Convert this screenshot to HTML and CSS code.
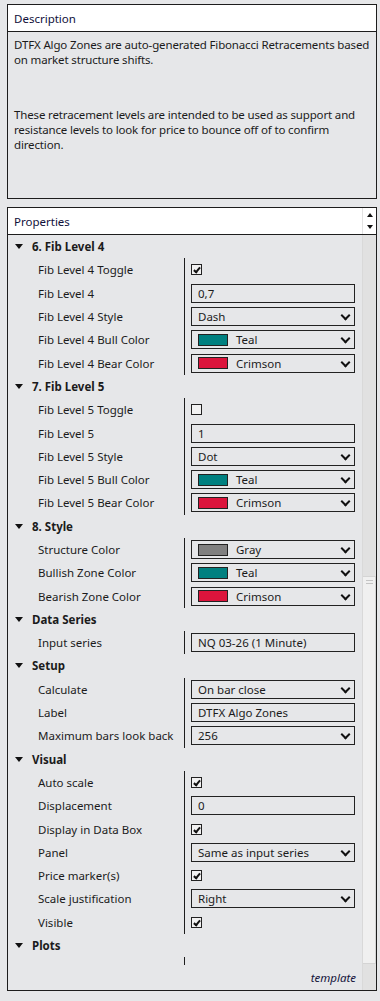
FILE: index.html
```html
<!DOCTYPE html>
<html lang="en">
<head>
    <meta charset="UTF-8">
    <meta name="viewport" content="width=device-width, initial-scale=1.0">
    <title>Indicator Properties</title>
    <link rel="stylesheet" href="styles.css">
</head>
<body>
    <div class="panel desc">
        <div class="panel-head">Description</div>
        <div class="desc-body">
            <p>DTFX Algo Zones are auto-generated Fibonacci Retracements based on market structure shifts.</p>
            <p class="second">These retracement levels are intended to be used as support and resistance levels to look for price to bounce off of to confirm direction.</p>
        </div>
    </div>

    <div class="panel props">
        <div class="panel-head">
            <span class="head-title">Properties</span>
            <div class="head-arrows">
                <span class="tri-up"></span>
                <span class="tri-down"></span>
            </div>
        </div>
        <div class="props-body">
            <div class="main">
                <div class="list">
                    <div class="cat"><span class="caret"></span>6. Fib Level 4</div>
                    <div class="items">
                        <div class="lbl">Fib Level 4 Toggle</div>
                        <div class="val"><span class="check on"></span></div>
                        <div class="lbl">Fib Level 4</div>
                        <div class="val"><div class="box">0,7</div></div>
                        <div class="lbl">Fib Level 4 Style</div>
                        <div class="val"><div class="box drop">Dash</div></div>
                        <div class="lbl">Fib Level 4 Bull Color</div>
                        <div class="val"><div class="box drop"><span class="swatch teal"></span>Teal</div></div>
                        <div class="lbl">Fib Level 4 Bear Color</div>
                        <div class="val"><div class="box drop"><span class="swatch crimson"></span>Crimson</div></div>
                    </div>

                    <div class="cat"><span class="caret"></span>7. Fib Level 5</div>
                    <div class="items">
                        <div class="lbl">Fib Level 5 Toggle</div>
                        <div class="val"><span class="check"></span></div>
                        <div class="lbl">Fib Level 5</div>
                        <div class="val"><div class="box">1</div></div>
                        <div class="lbl">Fib Level 5 Style</div>
                        <div class="val"><div class="box drop">Dot</div></div>
                        <div class="lbl">Fib Level 5 Bull Color</div>
                        <div class="val"><div class="box drop"><span class="swatch teal"></span>Teal</div></div>
                        <div class="lbl">Fib Level 5 Bear Color</div>
                        <div class="val"><div class="box drop"><span class="swatch crimson"></span>Crimson</div></div>
                    </div>

                    <div class="cat"><span class="caret"></span>8. Style</div>
                    <div class="items">
                        <div class="lbl">Structure Color</div>
                        <div class="val"><div class="box drop"><span class="swatch gray"></span>Gray</div></div>
                        <div class="lbl">Bullish Zone Color</div>
                        <div class="val"><div class="box drop"><span class="swatch teal"></span>Teal</div></div>
                        <div class="lbl">Bearish Zone Color</div>
                        <div class="val"><div class="box drop"><span class="swatch crimson"></span>Crimson</div></div>
                    </div>

                    <div class="cat"><span class="caret"></span>Data Series</div>
                    <div class="items">
                        <div class="lbl">Input series</div>
                        <div class="val"><div class="box">NQ 03-26 (1 Minute)</div></div>
                    </div>

                    <div class="cat"><span class="caret"></span>Setup</div>
                    <div class="items">
                        <div class="lbl">Calculate</div>
                        <div class="val"><div class="box drop">On bar close</div></div>
                        <div class="lbl">Label</div>
                        <div class="val"><div class="box">DTFX Algo Zones</div></div>
                        <div class="lbl">Maximum bars look back</div>
                        <div class="val"><div class="box drop">256</div></div>
                    </div>

                    <div class="cat"><span class="caret"></span>Visual</div>
                    <div class="items">
                        <div class="lbl">Auto scale</div>
                        <div class="val"><span class="check on"></span></div>
                        <div class="lbl">Displacement</div>
                        <div class="val"><div class="box">0</div></div>
                        <div class="lbl">Display in Data Box</div>
                        <div class="val"><span class="check on"></span></div>
                        <div class="lbl">Panel</div>
                        <div class="val"><div class="box drop">Same as input series</div></div>
                        <div class="lbl">Price marker(s)</div>
                        <div class="val"><span class="check on"></span></div>
                        <div class="lbl">Scale justification</div>
                        <div class="val"><div class="box drop">Right</div></div>
                        <div class="lbl">Visible</div>
                        <div class="val"><span class="check on"></span></div>
                    </div>

                    <div class="cat"><span class="caret"></span>Plots</div>
                    <div class="items">
                        <div class="lbl"></div>
                        <div class="val"></div>
                    </div>
                </div>
                <div class="footer">template</div>
            </div>
            <div class="scrollbar">
                <div class="thumb"><span class="grip"></span><span class="grip"></span></div>
            </div>
        </div>
    </div>
</body>
</html>
```

FILE: styles.css
```css
* {
    margin: 0;
    padding: 0;
    box-sizing: border-box;
}

body {
    width: 380px;
    height: 1001px;
    overflow: hidden;
    padding: 4px 0 0 7px;
    background: #e6e7e9;
    font-family: 'Noto Sans', 'Open Sans', sans-serif;
    font-size: 11.5px;
    color: #1b1b1b;
}

.panel {
    width: 370px;
    border: 1px solid #1d1d1d;
    background: #e6e7e9;
}

.panel-head {
    height: 27px;
    background: #fff;
    border-bottom: 1px solid #1d1d1d;
    padding-left: 6px;
    display: flex;
    align-items: center;
    color: #10103a;
}

/* description */
.desc {
    height: 195px;
}

.desc-body {
    padding: 5px 0 0 6px;
    line-height: 15px;
    letter-spacing: -0.15px;
}

.desc-body .second {
    margin-top: 40px;
}

/* properties */
.props {
    margin-top: 8px;
    height: 784px;
}

.props .panel-head {
    padding-right: 0;
}

.head-title {
    flex: 1;
}

.head-arrows {
    width: 14px;
    height: 100%;
    border-left: 1px solid #e2e2e2;
    display: flex;
    flex-direction: column;
    align-items: center;
    justify-content: center;
    gap: 8px;
}

.tri-up,
.tri-down {
    width: 0;
    height: 0;
    border-left: 3.5px solid transparent;
    border-right: 3.5px solid transparent;
}

.tri-up {
    border-bottom: 4px solid #111;
}

.tri-down {
    border-top: 4px solid #111;
}

.props-body {
    height: 755px;
    display: flex;
}

.main {
    width: 354px;
    display: flex;
    flex-direction: column;
}

.list {
    height: 730px;
    overflow: hidden;
}

.cat {
    height: 23.3px;
    display: flex;
    align-items: center;
    padding-left: 7px;
    font-weight: bold;
}

.caret {
    width: 0;
    height: 0;
    border-left: 4px solid transparent;
    border-right: 4px solid transparent;
    border-top: 5px solid #111;
    margin-right: 9px;
}

.items {
    display: grid;
    grid-template-columns: 177px 1fr;
    grid-auto-rows: 23.3px;
}

.lbl {
    padding-left: 30px;
    border-right: 1px solid #1d1d1d;
    display: flex;
    align-items: center;
    white-space: nowrap;
}

.val {
    padding-left: 6px;
    display: flex;
    align-items: center;
}

.box {
    width: 164px;
    height: 19px;
    border: 1px solid #222;
    padding-left: 6px;
    display: flex;
    align-items: center;
    white-space: nowrap;
    position: relative;
}

.box.drop::after {
    content: '';
    position: absolute;
    right: 5px;
    top: 4px;
    width: 5px;
    height: 5px;
    border-right: 2px solid #111;
    border-bottom: 2px solid #111;
    transform: rotate(45deg);
}

.swatch {
    width: 30px;
    height: 12px;
    border: 1px solid #222;
    margin-right: 8px;
}

.swatch.teal {
    background: #008080;
}

.swatch.crimson {
    background: #dc143c;
}

.swatch.gray {
    background: #808080;
}

.check {
    width: 11px;
    height: 11px;
    border: 1px solid #222;
    background: #f2f2f2;
    position: relative;
}

.check.on::after {
    content: '';
    position: absolute;
    left: 3px;
    top: 1px;
    width: 2px;
    height: 5px;
    border-right: 2px solid #111;
    border-bottom: 2px solid #111;
    transform: rotate(40deg);
}

.footer {
    flex: 1;
    display: flex;
    align-items: center;
    justify-content: flex-end;
    padding-right: 6px;
    font-style: italic;
    color: #14143c;
}

.scrollbar {
    width: 14px;
    background: #e1e1e1;
    border-left: 1px solid #d9d9d9;
    padding-top: 341px;
}

.thumb {
    width: 13px;
    height: 388px;
    background: #f0f0f0;
    border: 1px solid #d4d4d4;
    border-left: none;
    display: flex;
    flex-direction: column;
    align-items: center;
    padding-top: 3px;
    gap: 2px;
}

.grip {
    width: 7px;
    height: 1px;
    background: #c4c4c4;
}
```
